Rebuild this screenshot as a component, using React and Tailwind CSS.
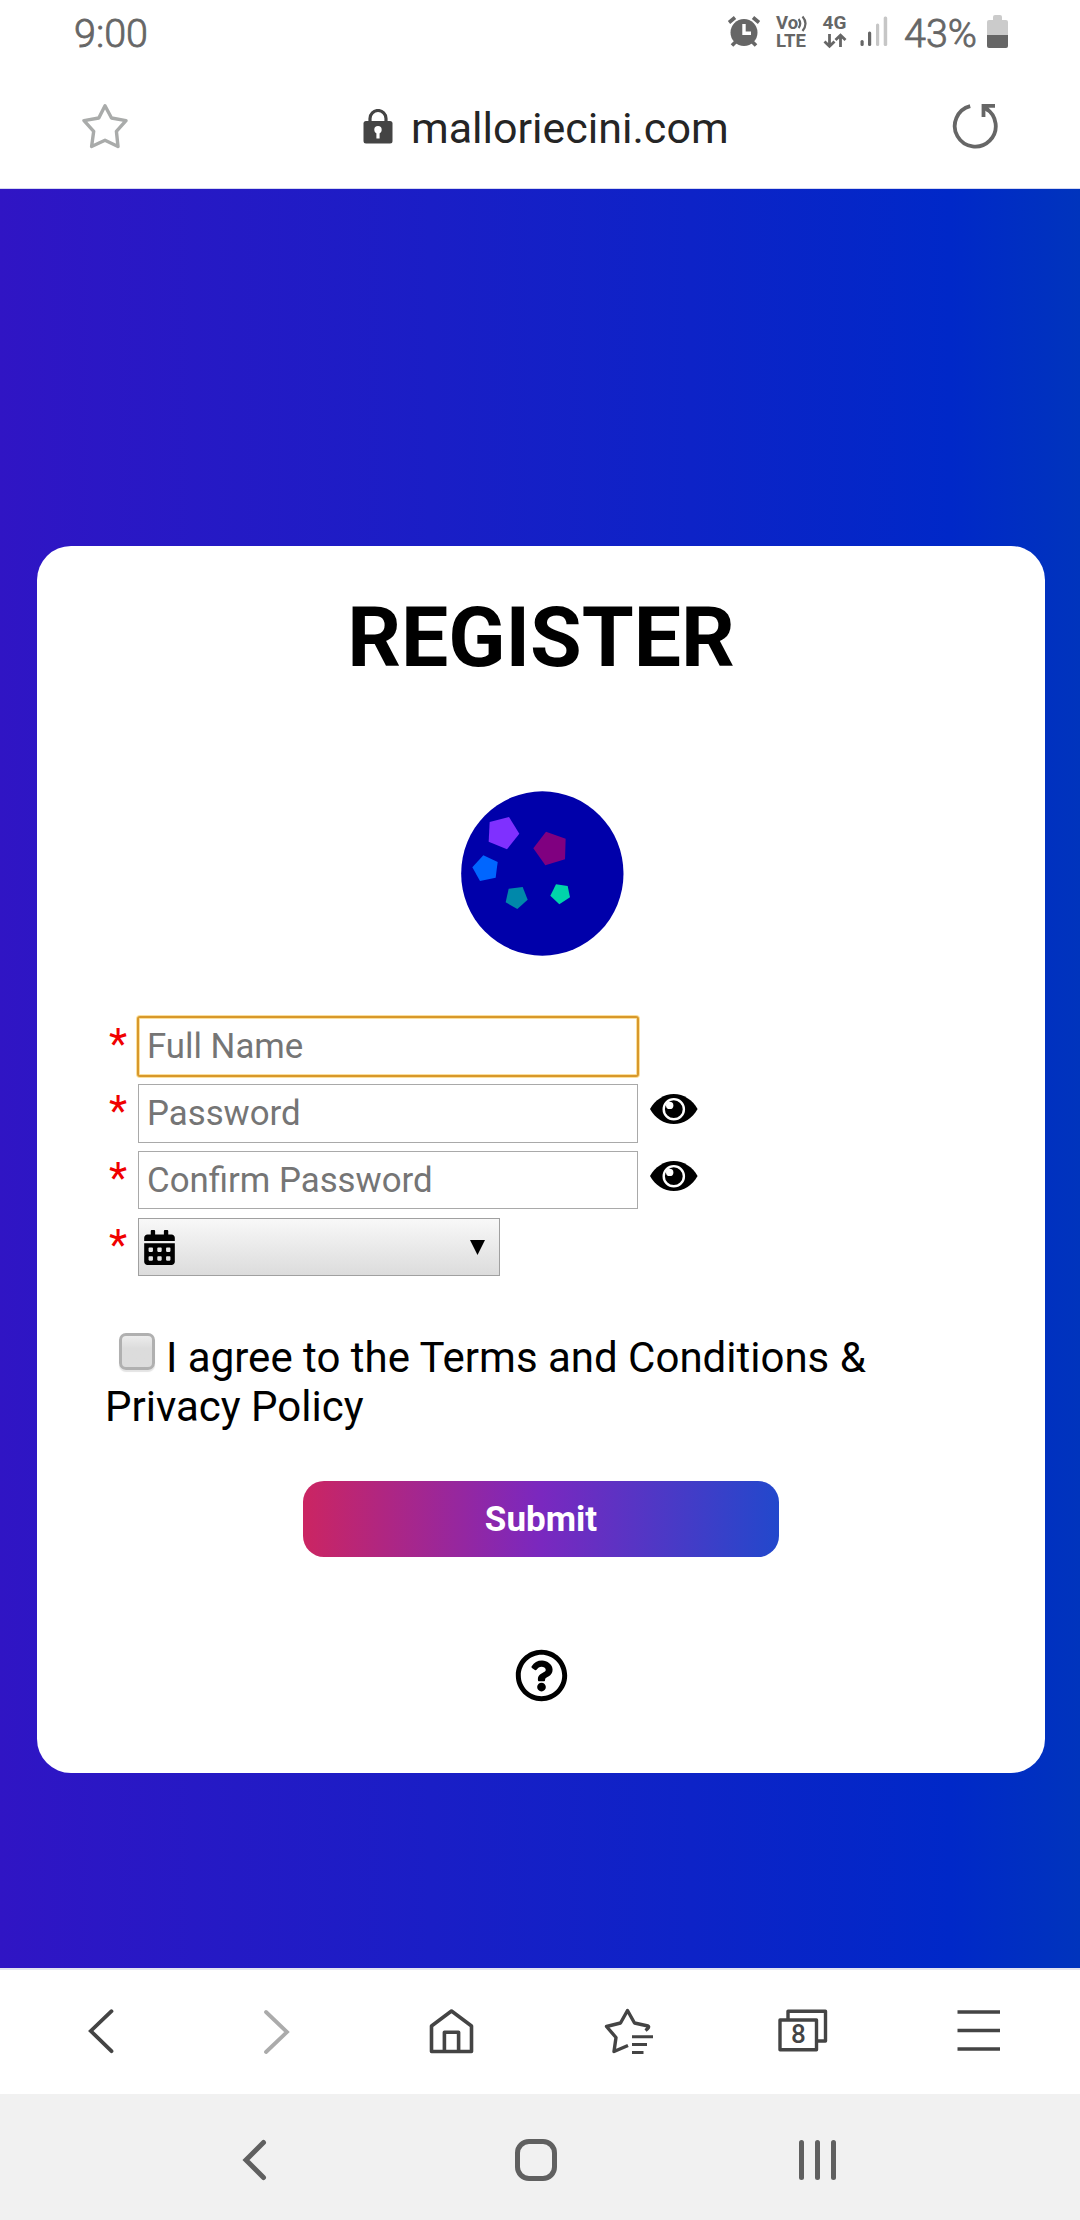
import { FaCalendarAlt, FaRegQuestionCircle } from "react-icons/fa";

const Star = () => (
  <svg className="h-[48px] w-[46px]" viewBox="82 103 46 48" fill="none" stroke="#a9abaa" strokeWidth="3.4" strokeLinejoin="round">
    <path d="M105 105.700L111.500 118L126 120.600L116.400 131.300L118 146.500L105 140.300L91.600 146.500L93.700 131.300L84 120.600L98.800 118Z" />
  </svg>
);

const Eye = () => (
  <svg className="h-[30px] w-[48px] shrink-0" viewBox="0 0 48 30">
    <path d="M0 15C5 6 14 0 23.800 0S42.600 6 47.600 15C42.600 24 33.600 30 23.800 30S5 24 0 15Z" />
    <circle cx="23.800" cy="15.200" r="10.100" fill="none" stroke="#fff" strokeWidth="2.400" />
    <circle cx="19.700" cy="11.400" r="3.700" fill="#fff" />
  </svg>
);

const Mark = () => (
  <span className="w-[30px] shrink-0 self-start pl-px pt-[2px] text-[42px] leading-[49px] text-[#f00000]">*</span>
);

function Field({ label, eye, focused, box = "h-[59px]" }) {
  return (
    <div className="flex h-[67px] items-start">
      <Mark />
      <div
        className={
          focused
            ? "-ml-px -mt-px h-[61px] w-[502px] rounded-[3px] border-2 border-[#d8982b] bg-white px-[8px] text-[34.8px] leading-[57px] text-[#757575] shadow-[0_0_0_1px_#fbdf9c,inset_0_0_0_1px_#fbdf9c]"
            : `${box} w-[500px] border border-[#a9a9a9] bg-white px-[8px] text-[34.8px] leading-[57px] text-[#757575]`
        }
      >
        {label}
      </div>
      {eye && <div className="ml-[12px] mt-[10px]"><Eye /></div>}
    </div>
  );
}

function StatusBar() {
  return (
    <div className="flex h-[66px] items-start pl-[74px] pr-[72px] text-[#666666]">
      <span className="mt-[11px] text-[39.5px] leading-[46px] font-light [-webkit-text-stroke:0.8px_#666]">9:00</span>
      <div className="ml-auto flex items-start">
        <svg className="mt-[15px] h-[34px] w-[34px]" viewBox="725 15 34 34" fill="none" stroke="#666" strokeWidth="3.600">
          <circle cx="742" cy="32.500" r="13.500" fill="#666" stroke="none" />
          <path d="M727 22.500L733 17.500M757 22.500L751 17.500M730 45.500L735 40.500M754 45.500L749 40.500" />
          <path d="M742 24V33.200H749" stroke="#fff" strokeWidth="3.400" />
        </svg>
        <div className="ml-[15px] mt-[14px] flex w-[34px] flex-col text-[18.5px] font-bold leading-[18px]">
          <span className="flex h-[18px]">
            Vo
            <svg className="h-[18px] w-[12px] shrink-0" viewBox="0 0 12 18" fill="none" stroke="#666" strokeWidth="2.200">
              <path d="M0.500 5Q4 9.500 0.500 14M4.500 2.500Q10.500 9.500 4.500 17" />
            </svg>
          </span>
          <span>LTE</span>
        </div>
        <div className="ml-[12px] mt-[14px] flex w-[25px] flex-col items-center text-[19px] font-bold leading-[18px]">
          <span>4G</span>
          <svg className="mt-[1px] h-[16px] w-[24px]" viewBox="0 0 24 16" fill="none" stroke="#666" strokeWidth="2.800">
            <path d="M6.500 1V13M1.500 8.500L6.500 13.300L11.500 8.500M17.500 14V3M12.500 7L17.500 2.200L22.500 7" />
          </svg>
        </div>
        <svg className="ml-[13px] mt-[16px] h-[31px] w-[28px]" viewBox="0 0 28 31" fill="#666">
          <rect x="0.500" y="24" width="3.200" height="6" rx="1.500" />
          <rect x="8" y="15.500" width="3.200" height="14.500" rx="1.500" />
          <rect x="16" y="7.500" width="3.200" height="22.500" rx="1.500" fill="#c6c6c6" />
          <rect x="23.700" y="0.500" width="3.500" height="29.500" rx="1.500" fill="#c6c6c6" />
        </svg>
        <span className="ml-[16px] mt-[11px] w-[74px] text-[39.5px] leading-[46px] font-light [-webkit-text-stroke:0.8px_#666]">43%</span>
        <svg className="ml-[9px] mt-[15px] h-[33px] w-[21px]" viewBox="0 0 21 33">
          <path d="M6 5V2Q6 0 8 0H13Q15 0 15 2V5H19Q21 5 21 7V20H0V7Q0 5 2 5Z" fill="#cbcbcb" />
          <path d="M0 20H21V31Q21 33 19 33H2Q0 33 0 31Z" fill="#666" />
        </svg>
      </div>
    </div>
  );
}

function AddressBar() {
  return (
    <div className="flex h-[122px] items-start pl-[82px] pr-[81px]">
      <div className="mt-[37px]"><Star /></div>
      <div className="ml-[235px] mt-[37px] flex items-start">
        <svg className="mt-[6px] h-[35px] w-[30px]" viewBox="0 0 30 35">
          <rect x="0.500" y="12" width="29" height="22.500" rx="2.500" fill="#444" />
          <path d="M7 13V9.500A8 8 0 0 1 23 9.500V13" fill="none" stroke="#444" strokeWidth="3.200" />
          <circle cx="15" cy="20.800" r="3.700" fill="#fff" />
          <path d="M15 21V29.500" stroke="#fff" strokeWidth="3.200" />
        </svg>
        <span className="ml-[18px] text-[43px] leading-[50px] text-[#252525]">malloriecini.com</span>
      </div>
      <svg className="ml-auto mt-[36px] h-[48px] w-[47px]" viewBox="952 102 47 48" fill="none" stroke="#666" strokeWidth="3.800">
        <path d="M970.200 106.200A20.500 20.500 0 1 0 985.500 108.300" />
        <path d="M995 105.800H983.500V117M983.500 105.800L988.500 110.500" />
      </svg>
    </div>
  );
}

const Emblem = () => (
  <svg className="h-[165px] w-[163px]" viewBox="64 63 489 495">
    <ellipse cx="308" cy="310.500" rx="243.500" ry="246.500" fill="#0000aa" />
    <path d="M150 156L208 141L239 191L202 238L147 215Z" fill="#7f30ff" />
    <path d="M319 185L378 206L376 268L317 286L281 235Z" fill="#800080" />
    <path d="M131 256L174 276L168 323L121 333L98 292Z" fill="#0066ff" />
    <path d="M207 356L249 351L264 389L233 417L198 397Z" fill="#0088aa" />
    <path d="M349 343L384 348L391 382L359 403L332 377Z" fill="#00d4aa" />
  </svg>
);

function RegisterCard() {
  return (
    <main className="ml-[37px] mt-[357px] flex h-[1227px] w-[1008px] flex-col rounded-[34px] bg-white text-black">
      <h1 className="mt-[42px] text-center text-[84px] font-bold leading-[100px]">REGISTER</h1>
      <div className="mt-[103px] flex justify-center pl-[3px]"><Emblem /></div>
      <form className="mt-[61px] flex flex-col pl-[71px]">
        <Field label="Full Name" focused />
        <Field label="Password" eye />
        <Field label="Confirm Password" eye box="h-[58px]" />
        <div className="flex h-[59px] items-start">
          <Mark />
          <div className="flex h-[58px] w-[362px] items-center justify-between border border-[#a0a0a0] bg-linear-to-b from-[#f8f8f8] to-[#dcdcdc] pl-[5px] pr-[14px]">
            <FaCalendarAlt className="h-[35px] w-[31px]" />
            <svg className="h-[15px] w-[15px]" viewBox="0 0 15 15"><path d="M0 0H15L7.500 15Z" /></svg>
          </div>
        </div>
      </form>
      <p className="ml-[68px] mt-[56px] w-[860px] text-[42px] leading-[49px]">
        <span className="ml-[14px] mr-[11px] inline-block h-[37px] w-[36px] translate-y-[-2px] rounded-[7px] border-[3px] border-[#b0b0b0] bg-linear-to-b from-[#ececec] to-[#dcdcdc] to-40% shadow-[0_2px_1px_#e4e4e4]" />
        I agree to the Terms and Conditions &amp; Privacy Policy
      </p>
      <button className="ml-[266px] mt-[50px] h-[76px] w-[476px] rounded-[21px] bg-[linear-gradient(90deg,#cb2562,#7a28bf_50%,#2248cc)] pt-[2px] text-[35px] font-bold text-white">
        Submit
      </button>
      <div className="mt-[92px] flex justify-center"><FaRegQuestionCircle className="h-[53px] w-[53px]" /></div>
    </main>
  );
}

function BrowserNav() {
  return (
    <nav className="flex h-[126px] items-start border-t-2 border-[#e2e4f0] bg-white pl-[86px] pt-[35px] text-[#444]">
      <svg className="h-[52px] w-[30px]" viewBox="86 2005 30 52" fill="none" stroke="#444" strokeWidth="3.800" strokeLinecap="round">
        <path d="M111.500 2011.200L90.800 2031L111.500 2051.200" />
      </svg>
      <svg className="ml-[146px] h-[52px] w-[30px]" viewBox="262 2005 30 52" fill="none" stroke="#ababab" strokeWidth="3.800" strokeLinecap="round">
        <path d="M266 2012L287 2032L266 2052" />
      </svg>
      <svg className="ml-[135px] h-[52px] w-[48px]" viewBox="427 2005 48 52" fill="none" stroke="#444" strokeWidth="3.600" strokeLinejoin="round">
        <path d="M431.500 2026L451.500 2011L471.500 2026V2051.500H431.500Z" />
        <path d="M444.400 2051V2032.300H458.600V2051" />
      </svg>
      <svg className="ml-[127px] h-[52px] w-[52px]" viewBox="602 2005 52 52" fill="none" stroke="#444" strokeWidth="3.400" strokeLinejoin="round">
        <path d="M645.500 2030.500Q650 2027 648 2026L634.500 2023L627.500 2010.500L620.500 2023L606.500 2026.500L616 2037.500L614 2051.500L628 2045.500" />
        <path d="M632 2036.700H653M632 2044.600H647M632 2052.500H643.500" strokeWidth="3" />
      </svg>
      <div className="relative ml-[122px] h-[52px] w-[52px]">
        <svg className="h-[52px] w-[52px]" viewBox="776 2005 52 52" fill="none" stroke="#444" strokeWidth="3.400" strokeLinejoin="round">
          <path d="M788 2019V2011.200H825.500V2041H818" />
          <path d="M780 2020H816.500V2049.800H780Z" />
        </svg>
        <span className="absolute left-[4px] top-[14px] w-[37px] text-center text-[26px] font-medium leading-[30px]">8</span>
      </div>
      <svg className="ml-[128px] h-[52px] w-[46px]" viewBox="956 2005 46 52" fill="none" stroke="#444" strokeWidth="3.600">
        <path d="M957.500 2012H1000M957.500 2030.500H1000M957.500 2049H1000" />
      </svg>
    </nav>
  );
}

function SystemNav() {
  return (
    <div className="flex h-[126px] items-center bg-[#f1f1f1] pl-[241px] pt-[6px]">
      <svg className="h-[46px] w-[28px]" viewBox="0 0 28 46" fill="none" stroke="#606060" strokeWidth="5" strokeLinecap="round">
        <path d="M22.500 5.500L5 23L22.500 40.500" />
      </svg>
      <div className="ml-[246px] h-[42px] w-[42px] rounded-[14px] border-[5px] border-[#606060]" />
      <div className="ml-[242px] flex h-[40px] gap-[11px]">
        <div className="w-[5px] rounded-full bg-[#606060]" />
        <div className="w-[5px] rounded-full bg-[#606060]" />
        <div className="w-[5px] rounded-full bg-[#606060]" />
      </div>
    </div>
  );
}

export default function App() {
  return (
    <div className="flex h-[2220px] w-[1080px] flex-col overflow-hidden bg-white font-['Roboto',sans-serif]">
      <header className="h-[189px] border-b border-[#d5d8f0] bg-white">
        <StatusBar />
        <AddressBar />
      </header>
      <div className="flex h-[1779px] flex-col bg-[linear-gradient(90deg,#3015c4_0%,#1a1ec6_40%,#0028c8_88%,#0034bd_100%)]">
        <RegisterCard />
      </div>
      <BrowserNav />
      <SystemNav />
    </div>
  );
}
